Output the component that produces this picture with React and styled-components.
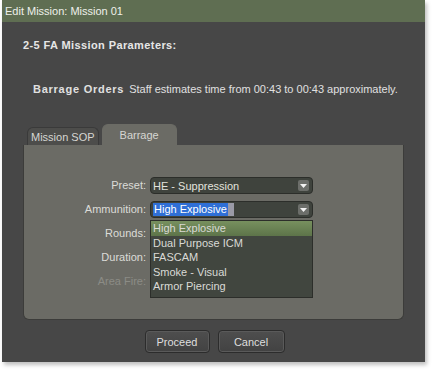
import React from 'react';
import styled, { createGlobalStyle } from 'styled-components';

const GlobalStyle = createGlobalStyle`
  body {
    margin: 0;
    background: #ffffff;
    font-family: "Liberation Sans", Arial, sans-serif;
  }
`;

const Page = styled.div`
  width: 434px;
  height: 371px;
  padding-left: 2px;
  box-sizing: border-box;
`;

const Window = styled.div`
  width: 423px;
  height: 362px;
  background: #474747;
  box-shadow: 2px 3px 4px rgba(0, 0, 0, 0.25);
  display: flex;
  flex-direction: column;
`;

const TitleBar = styled.div`
  height: 22px;
  background: #5f6e52;
  color: #eef0ea;
  font-size: 11px;
  display: flex;
  align-items: center;
  padding-left: 3px;
`;

const Content = styled.div`
  flex: 1;
  display: flex;
  flex-direction: column;
  padding: 16px 21px 0 21px;
`;

const Heading = styled.div`
  color: #e6e6e6;
  font-weight: bold;
  font-size: 11px;
  letter-spacing: 0.4px;
  height: 14px;
  line-height: 14px;
`;

const Orders = styled.div`
  margin-top: 30px;
  padding-left: 10px;
  color: #e0e0e0;
  font-size: 11px;
  display: flex;
  gap: 5px;
  height: 14px;
  line-height: 14px;

  b {
    font-weight: bold;
    letter-spacing: 0.75px;
  }
`;

const Tabs = styled.div`
  margin-top: 28px;
  padding-left: 4px;
  display: flex;
  align-items: flex-end;
  gap: 3px;
  height: 21px;
  flex-shrink: 0;
`;

const Tab = styled.div`
  height: ${p => (p.$active ? '21px' : '18px')};
  padding: 0 ${p => (p.$active ? '17px' : '3px')};
  background: ${p => (p.$active ? '#6b6b65' : '#4d4d4b')};
  border: 1px solid ${p => (p.$active ? '#6b6b65' : '#3a3a3a')};
  border-bottom: none;
  border-radius: 6px 6px 0 0;
  color: #d6d6d2;
  font-size: 11px;
  display: flex;
  align-items: ${p => (p.$active ? 'flex-start' : 'center')};
  padding-top: ${p => (p.$active ? '4px' : '0')};
  box-sizing: border-box;
`;

const Panel = styled.div`
  width: 381px;
  height: 175px;
  flex-shrink: 0;
  box-sizing: border-box;
  background: #6b6b65;
  border: 1px solid #3c3c3a;
  border-top: none;
  border-radius: 0 0 6px 6px;
  padding-top: 32px;
  position: relative;
`;

const Form = styled.div`
  display: grid;
  grid-template-columns: 122px 163px;
  column-gap: 4px;
  row-gap: 7px;
  align-items: center;
`;

const Label = styled.div`
  text-align: right;
  font-size: 11px;
  color: ${p => (p.$disabled ? '#8c8c86' : '#dcdcd8')};
  height: 17px;
  line-height: 17px;
`;

const Select = styled.div`
  height: 17px;
  box-sizing: border-box;
  background: #3f433d;
  border: 1px solid #2c2e2a;
  border-radius: 4px;
  display: flex;
  align-items: center;
  padding: 0 3px 0 2px;
  color: #e2e2de;
  font-size: 11px;
`;

const SelectText = styled.div`
  flex: 1;
  display: flex;
  align-items: center;
`;

const Highlight = styled.span`
  background: #2f6fd6;
  color: #ffffff;
  padding: 0 1px;
  line-height: 13px;
`;

const Caret = styled.span`
  width: 6px;
  height: 13px;
  background: #9a9aa6;
`;

const ArrowBox = styled.div`
  width: 11px;
  height: 11px;
  border-radius: 2px;
  background: #6c6e6a;
  display: flex;
  align-items: center;
  justify-content: center;
`;

const Empty = styled.div`
  height: 17px;
`;

const DropList = styled.div`
  position: absolute;
  left: 126px;
  top: 75px;
  width: 163px;
  box-sizing: border-box;
  background: #41463f;
  border: 1px solid #2c2e2a;
  padding-bottom: 3px;
`;

const Option = styled.div`
  height: 14.5px;
  line-height: 14.5px;
  padding-left: 2px;
  font-size: 11px;
  color: #dadad6;
  background: ${p => (p.$selected ? 'linear-gradient(#77905f, #5d7449)' : 'transparent')};
`;

const Buttons = styled.div`
  display: flex;
  justify-content: center;
  gap: 8px;
  margin-top: 10px;
  padding-left: 2px;
`;

const Button = styled.button`
  width: ${p => p.$w}px;
  height: 23px;
  background: linear-gradient(#4e4e4e, #424242);
  border: 1px solid #2c2c2c;
  box-shadow: inset 0 0 0 1px #5a5a5a;
  border-radius: 4px;
  color: #dedede;
  font-family: inherit;
  font-size: 11px;
  padding: 0;
`;

const Arrow = () => (
  <ArrowBox>
    <svg width="7" height="4" viewBox="0 0 7 4">
      <path d="M0 0 H7 L3.5 4 Z" fill="#f2f2f2" />
    </svg>
  </ArrowBox>
);

const options = ['High Explosive', 'Dual Purpose ICM', 'FASCAM', 'Smoke - Visual', 'Armor Piercing'];

export default function App() {
  return (
    <Page>
      <GlobalStyle />
      <Window>
        <TitleBar>Edit Mission: Mission 01</TitleBar>
        <Content>
          <Heading>2-5 FA Mission Parameters:</Heading>
          <Orders>
            <b>Barrage Orders</b>
            <span>Staff estimates time from 00:43 to 00:43 approximately.</span>
          </Orders>
          <Tabs>
            <Tab>Mission SOP</Tab>
            <Tab $active>Barrage</Tab>
          </Tabs>
          <Panel>
            <Form>
              <Label>Preset:</Label>
              <Select>
                <SelectText>HE - Suppression</SelectText>
                <Arrow />
              </Select>
              <Label>Ammunition:</Label>
              <Select>
                <SelectText>
                  <Highlight>High Explosive</Highlight>
                  <Caret />
                </SelectText>
                <Arrow />
              </Select>
              <Label>Rounds:</Label>
              <Empty />
              <Label>Duration:</Label>
              <Empty />
              <Label $disabled>Area Fire:</Label>
              <Empty />
            </Form>
            <DropList>
              {options.map((o, i) => (
                <Option key={o} $selected={i === 0}>{o}</Option>
              ))}
            </DropList>
          </Panel>
          <Buttons>
            <Button $w={65}>Proceed</Button>
            <Button $w={67}>Cancel</Button>
          </Buttons>
        </Content>
      </Window>
    </Page>
  );
}
